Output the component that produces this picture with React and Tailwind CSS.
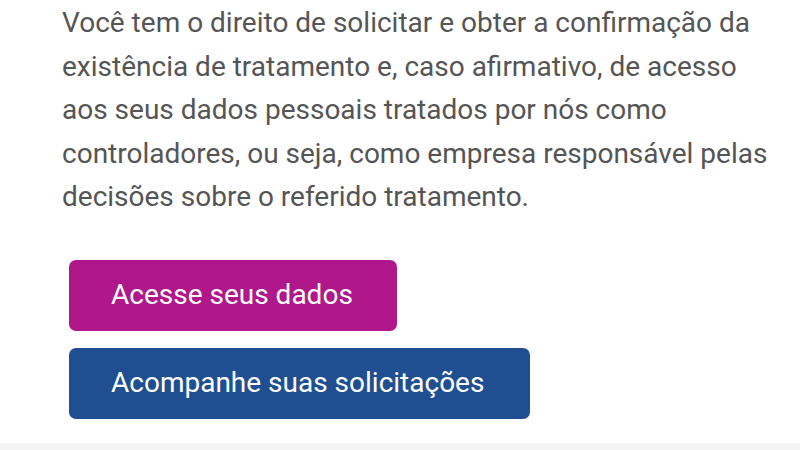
import React from 'react';

export default function App() {
  return (
    <div className="w-[800px] h-[450px] bg-white flex flex-col overflow-hidden" style={{ fontFamily: 'Roboto, "Noto Sans", sans-serif' }}>
      <div className="flex-1 pl-[62px] pt-[1px]">
        <p className="w-[716px] text-[28px] leading-[43.5px] text-[#555555]">
          Você tem o direito de solicitar e obter a confirmação da existência de tratamento e, caso afirmativo, de acesso aos seus dados pessoais tratados por nós como controladores, ou seja, como empresa responsável pelas decisões sobre o referido tratamento.
        </p>
        <div className="flex flex-col items-start gap-[17px] mt-[41px] ml-[7px]">
          <button className="h-[71px] w-[328px] rounded-[7px] bg-[#b0178a] text-white text-[28px] text-left pl-[42px]">
            Acesse seus dados
          </button>
          <button className="h-[71px] w-[461px] rounded-[7px] bg-[#1f4f91] text-white text-[28px] text-left pl-[42px]">
            Acompanhe suas solicitações
          </button>
        </div>
      </div>
      <div className="h-[7px] bg-[#f4f4f4]" />
    </div>
  );
}
